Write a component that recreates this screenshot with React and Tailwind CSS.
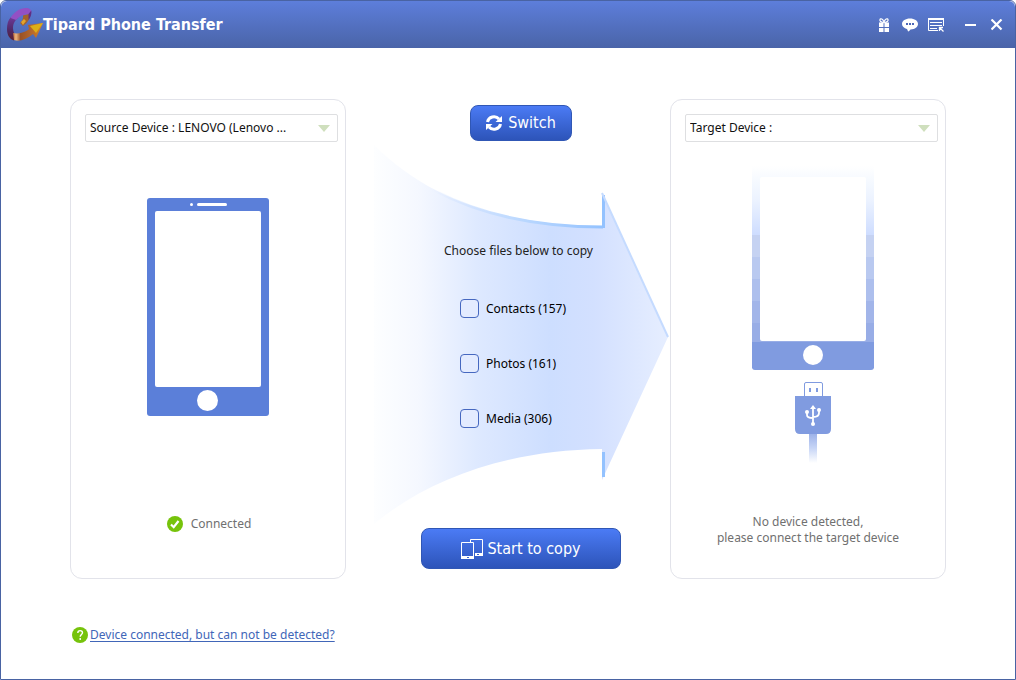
import React from "react";

function Logo() {
  return (
    <svg viewBox="7 7 36 33" className="h-[33px] w-9 shrink-0" aria-hidden="true">
      <defs>
        <linearGradient id="logo-orange" gradientUnits="userSpaceOnUse" x1="13" y1="0" x2="43" y2="0">
          <stop offset="0" stopColor="#b8683a" />
          <stop offset=".1" stopColor="#f0b880" />
          <stop offset=".25" stopColor="#9a5226" />
          <stop offset=".6" stopColor="#b3662c" />
          <stop offset="1" stopColor="#d9861f" />
        </linearGradient>
        <linearGradient id="logo-side" x1="0" y1="0" x2="0" y2="1">
          <stop offset="0" stopColor="#6d3a9a" />
          <stop offset=".6" stopColor="#4f2863" />
          <stop offset="1" stopColor="#5e1f2a" />
        </linearGradient>
      </defs>
      <path d="M23 14.500l7-2c1 4-2 9-7 12.500l-3-3c2-2 3.500-4 3-7.500z" fill="#a5622a" />
      <path d="M21 21l3-3 2 2-3 4z" fill="#e2a52d" />
      <path d="M11 16C8 19 7 23 7 28c0 6 2.500 10 7 11.500L14 32c-2-6-1-11 4-15z" fill="url(#logo-side)" />
      <path d="M10.500 17C14 11 20 7 26 7c4.500 0 6 2.500 5 6.500-5-1-10 0-15 5.500z" fill="#9350c4" />
      <path d="M28.500 13l2.800-3.500c.5 3.500-.5 6.500-2.800 9.500z" fill="#5f3083" />
      <path d="M13 32c5 1 10 0 15-3l1-1-1-4 15-2-7 15-3-4c-6 5-13 8-19 6z" fill="url(#logo-orange)" />
      <path d="M30 25l13-3-7 10z" fill="#dcae18" />
    </svg>
  );
}

function GiftIcon() {
  return (
    <svg viewBox="0 0 12 14" className="h-3.5 w-3" aria-hidden="true">
      <path d="M5.500 4.500C3 4.500 1.500 3 2 1.500S5 1 6 4C7 1 9.500 0 10 1.500S9 4.500 6.500 4.500" fill="none" stroke="#fff" strokeWidth="1.200" />
      <path d="M1 4.500h4.500V9H1zM6.500 4.500H11V9H6.500zM1 10h4.500v4H1zM6.500 10H11v4H6.500z" fill="#fff" />
    </svg>
  );
}

function ChatIcon() {
  return (
    <svg viewBox="0 0 16 14" className="h-3.5 w-4" aria-hidden="true">
      <path d="M8 .5C3.500 .5 0 2.800 0 6c0 2.300 2 4.200 5 5 .5 1 1 2 1 2.500 1-.4 2-1.300 2.500-2.100C13 11.200 16 9 16 6 16 2.800 12.500 .5 8 .5z" fill="#fff" />
      <path d="M4 5h2v2H4zM7 5h2v2H7zM10 5h2v2h-2z" fill="#4c67b8" />
    </svg>
  );
}

function FormIcon() {
  return (
    <svg viewBox="0 0 17 14" className="h-3.5 w-[17px]" aria-hidden="true">
      <path d="M10 12.500H.5V.5h15V8" fill="none" stroke="#fff" />
      <path d="M0 0h16v2H0zM2 4h12v1H2zM2 7h12v1H2zM2 10h7v1H2z" fill="#fff" />
      <path d="M11.500 13V9.500H15M12 10l3.500 3.500" fill="none" stroke="#fff" strokeWidth="1.300" />
    </svg>
  );
}

function DeviceSelect({ label, text }) {
  return (
    <div className="relative -mr-[7px]">
      <select aria-label={label} className="block h-7 w-full appearance-none rounded-xs border border-[#dedfe1] bg-white pr-8 pl-1 text-xs text-[#111]">
        <option>{text}</option>
      </select>
      <svg viewBox="0 0 12 7" className="pointer-events-none absolute top-[11px] right-2 h-[7px] w-3" aria-hidden="true">
        <path d="M0 0h12L6 7z" fill="#cfdfbd" />
      </svg>
    </div>
  );
}

function SourcePhone() {
  return (
    <svg viewBox="0 0 122 218" className="h-[218px] w-[122px]" aria-hidden="true">
      <rect width="122" height="218" rx="3" fill="#5b7fd9" />
      <rect x="8" y="13" width="106" height="176" rx="2" fill="#fff" />
      <circle cx="44.500" cy="6.500" r="1.500" fill="#fff" />
      <rect x="50" y="5" width="30" height="3" rx="1.500" fill="#fff" />
      <circle cx="60.500" cy="202.500" r="10.500" fill="#fff" />
    </svg>
  );
}

function TargetPhone() {
  return (
    <svg viewBox="0 0 122 298" className="h-[298px] w-[122px]" aria-hidden="true">
      <defs>
        <linearGradient id="cable-fade" x1="0" y1="0" x2="0" y2="1">
          <stop offset="0" stopColor="#9db2e9" />
          <stop offset=".5" stopColor="#c8d6f6" />
          <stop offset="1" stopColor="#fff" />
        </linearGradient>
        <linearGradient id="frame-fade" x1="0" y1="0" x2="0" y2="1">
          <stop offset="0" stopColor="#fff" />
          <stop offset=".15" stopColor="#f8fbff" />
          <stop offset=".5" stopColor="#ebf2ff" />
          <stop offset="1" stopColor="#cddcff" />
        </linearGradient>
      </defs>
      <rect width="122" height="70" fill="url(#frame-fade)" />
      {["#c5d2f2", "#b9c9f0", "#adbfed", "#a2b5e9", "#98ade6", "#8fa6e3"].map((c, i) => (
        <rect key={c} y={69 + i * 22} width="122" height="23" fill={c} />
      ))}
      <path d="M0 176h122v25q0 3-3 3H3q-3 0-3-3z" fill="#809be0" />
      <rect x="8" y="11" width="106" height="164" rx="2" fill="#fff" />
      <circle cx="61" cy="189" r="10" fill="#fff" />
      <path d="M52.500 231v-13q0-1.500 1.500-1.500h15q1.500 0 1.500 1.500v13" fill="#fff" stroke="#809be0" />
      <path d="M57 222h2v4h-2zM64 222h2v4h-2zM43 230h36v33q0 5-5 5H48q-5 0-5-5z" fill="#809be0" />
      <rect x="57" y="268" width="8" height="29" fill="url(#cable-fade)" />
      <path d="M61 242v17M55 247v2q0 3 6 3M67 245v2q0 4-6 4" fill="none" stroke="#fff" strokeWidth="1.800" />
      <path d="M61 239l3 4h-6z" fill="#fff" />
      <circle cx="55" cy="246" r="2" fill="#fff" />
      <circle cx="67" cy="244" r="2" fill="#fff" />
      <circle cx="61" cy="258" r="2" fill="#fff" />
    </svg>
  );
}

function CopyArrow() {
  return (
    <svg viewBox="0 0 298 384" preserveAspectRatio="none" className="h-96 w-full [grid-area:1/1]" aria-hidden="true">
      <defs>
        <linearGradient id="arrow-fill" gradientUnits="userSpaceOnUse" x1="2" y1="0" x2="296" y2="0">
          <stop offset="0" stopColor="#fdfeff" />
          <stop offset=".15" stopColor="#f5f8ff" />
          <stop offset=".35" stopColor="#dee9ff" />
          <stop offset=".6" stopColor="#cddeff" />
          <stop offset=".75" stopColor="#d3e0ff" />
          <stop offset="1" stopColor="#e6eeff" />
        </linearGradient>
        <linearGradient id="arrow-edge" gradientUnits="userSpaceOnUse" x1="60" y1="0" x2="232" y2="0">
          <stop offset="0" stopColor="#c8dcff" stopOpacity="0" />
          <stop offset=".45" stopColor="#c0dbff" />
          <stop offset="1" stopColor="#93c2ff" />
        </linearGradient>
      </defs>
      <path d="M2 1C60 59 140 82 230 82V49L296 193 230 336V305C140 306 60 332 2 380z" fill="url(#arrow-fill)" />
      <path d="M2 2C60 60 140 83 231 83" fill="none" stroke="url(#arrow-edge)" strokeWidth="3" />
      <path d="M231.500 51v33M231.500 308v25" fill="none" stroke="#93c2ff" strokeWidth="3" />
      <path d="M230 49L296 193" fill="none" stroke="#c5dbff" strokeWidth="2" />
    </svg>
  );
}

function SwitchIcon() {
  return (
    <svg viewBox="0 0 16 16" className="size-4" aria-hidden="true">
      <path d="M1.500 7C2.500 1.500 9.500 0 13 4M14.500 9c-1 5.500-8 7-11.500 3" fill="none" stroke="#fff" strokeWidth="3" />
      <path d="M16 1v6h-6.500zM0 15V9h6.500z" fill="#fff" />
    </svg>
  );
}

function DevicesIcon() {
  return (
    <svg viewBox="0 0 22 20" className="h-5 w-[22px]" aria-hidden="true">
      <path d="M9.500 3V.5h12v16H14" fill="none" stroke="#fff" />
      <path d="M14 14h8v3h-8z" fill="#fff" />
      <path d="M.5 3.500h12v16H.5z" fill="none" stroke="#fff" />
      <path d="M0 17h13v3H0z" fill="#fff" />
      <path d="M6 18h2v1H6zM16 15h2v1h-2z" fill="#3c62cf" />
    </svg>
  );
}

const files = [
  { id: "contacts", label: "Contacts (157)" },
  { id: "photos", label: "Photos (161)" },
  { id: "media", label: "Media (306)" },
];

const actionButton =
  "flex items-center justify-center rounded-lg border border-[#3057b5] bg-linear-to-b from-[#4b7bf5] to-[#2d54b9] font-['DejaVu_Sans_Condensed','DejaVu_Sans',sans-serif] text-base text-white";

export default function App() {
  return (
    <div className="flex min-h-screen flex-col rounded-t-md border border-[#4963a3] bg-white font-['Noto_Sans',sans-serif] text-xs leading-4">
      <header className="flex h-[47px] items-center rounded-t-md bg-linear-to-b from-[#5d7edb] to-[#4a64a8] pr-3 pl-1.5 text-white">
        <Logo />
        <h1 className="flex-1 font-['DejaVu_Sans_Condensed','DejaVu_Sans',sans-serif] text-base font-bold">Tipard Phone Transfer</h1>
        <nav className="flex items-center gap-2.5" aria-label="Window">
          <button type="button" aria-label="Gift" className="mr-0.5"><GiftIcon /></button>
          <button type="button" aria-label="Feedback"><ChatIcon /></button>
          <button type="button" aria-label="Menu"><FormIcon /></button>
          <button type="button" aria-label="Minimize" className="ml-2.5">
            <svg viewBox="0 0 12 12" className="size-3" aria-hidden="true"><path d="M0 5h11v2H0z" fill="#fff" /></svg>
          </button>
          <button type="button" aria-label="Close" className="ml-1">
            <svg viewBox="0 0 12 12" className="size-3" aria-hidden="true"><path d="M.5 .5l10 10M10.500 .5l-10 10" stroke="#fff" strokeWidth="2.200" /></svg>
          </button>
        </nav>
      </header>

      <main className="flex flex-1 flex-col px-[69px] pt-[51px]">
        <div className="flex">
          <section className="flex w-[276px] shrink-0 flex-col rounded-xl border border-[#e2e3ea] px-3.5 pt-3.5 pb-[46px]">
            <DeviceSelect label="Source device" text="Source Device : LENOVO (Lenovo ..." />
            <div className="mt-14 flex justify-center"><SourcePhone /></div>
            <p className="mt-auto flex items-center justify-center gap-2 pl-0.5 text-[#707070]">
              <svg viewBox="0 0 16 16" className="size-4" aria-hidden="true">
                <circle cx="8" cy="8" r="8" fill="#76c30b" />
                <path d="M4 8.500l2.700 2.700L11.500 5" fill="none" stroke="#fff" strokeWidth="2.200" />
              </svg>
              Connected
            </p>
          </section>

          <section className="flex flex-1 flex-col items-center pt-1.5 pb-2.5 pl-[26px]">
            <button type="button" className={`${actionButton} h-9 w-[102px] gap-1.5`}>
              <SwitchIcon />Switch
            </button>
            <div className="mt-[3px] grid w-full">
              <CopyArrow />
              <fieldset className="w-[154px] justify-self-center pt-[99px] [grid-area:1/1]">
                <legend className="contents"><span className="block whitespace-nowrap text-[#222]">Choose files below to copy</span></legend>
                <div className="mt-10 flex flex-col gap-9 pl-4">
                  {files.map((f) => (
                    <label key={f.id} htmlFor={f.id} className="flex items-center gap-[7px] whitespace-nowrap text-black">
                      <input id={f.id} type="checkbox" className="size-[19px] appearance-none rounded-sm border border-[#4668c0] bg-[#e3ebff] checked:bg-[#4668c0]" />
                      {f.label}
                    </label>
                  ))}
                </div>
              </fieldset>
            </div>
            <button type="button" className={`${actionButton} h-[41px] w-[200px] gap-1`}>
              <DevicesIcon />Start to copy
            </button>
          </section>

          <section className="flex w-[276px] shrink-0 flex-col rounded-xl border border-[#e2e3ea] px-3.5 pt-3.5 pb-[31px]">
            <DeviceSelect label="Target device" text="Target Device :" />
            <div className="mt-6 flex justify-center pl-2.5"><TargetPhone /></div>
            <p className="mt-[50px] text-center text-[#707070]">
              No device detected,<br />please connect the target device
            </p>
          </section>
        </div>

        <div className="mt-12 flex items-center gap-0.5 pl-0.5">
          <svg viewBox="0 0 16 16" className="size-4" aria-hidden="true">
            <circle cx="8" cy="8" r="8" fill="#76c30b" />
            <path d="M5.800 6C5.800 2.800 10.500 3 10.500 5.700c0 1.700-2.300 1.800-2.300 4M8.200 11v2" fill="none" stroke="#fff" strokeWidth="1.400" />
          </svg>
          <a href="#help" className="text-[#4166b8] underline underline-offset-2">Device connected, but can not be detected?</a>
        </div>
      </main>
    </div>
  );
}
